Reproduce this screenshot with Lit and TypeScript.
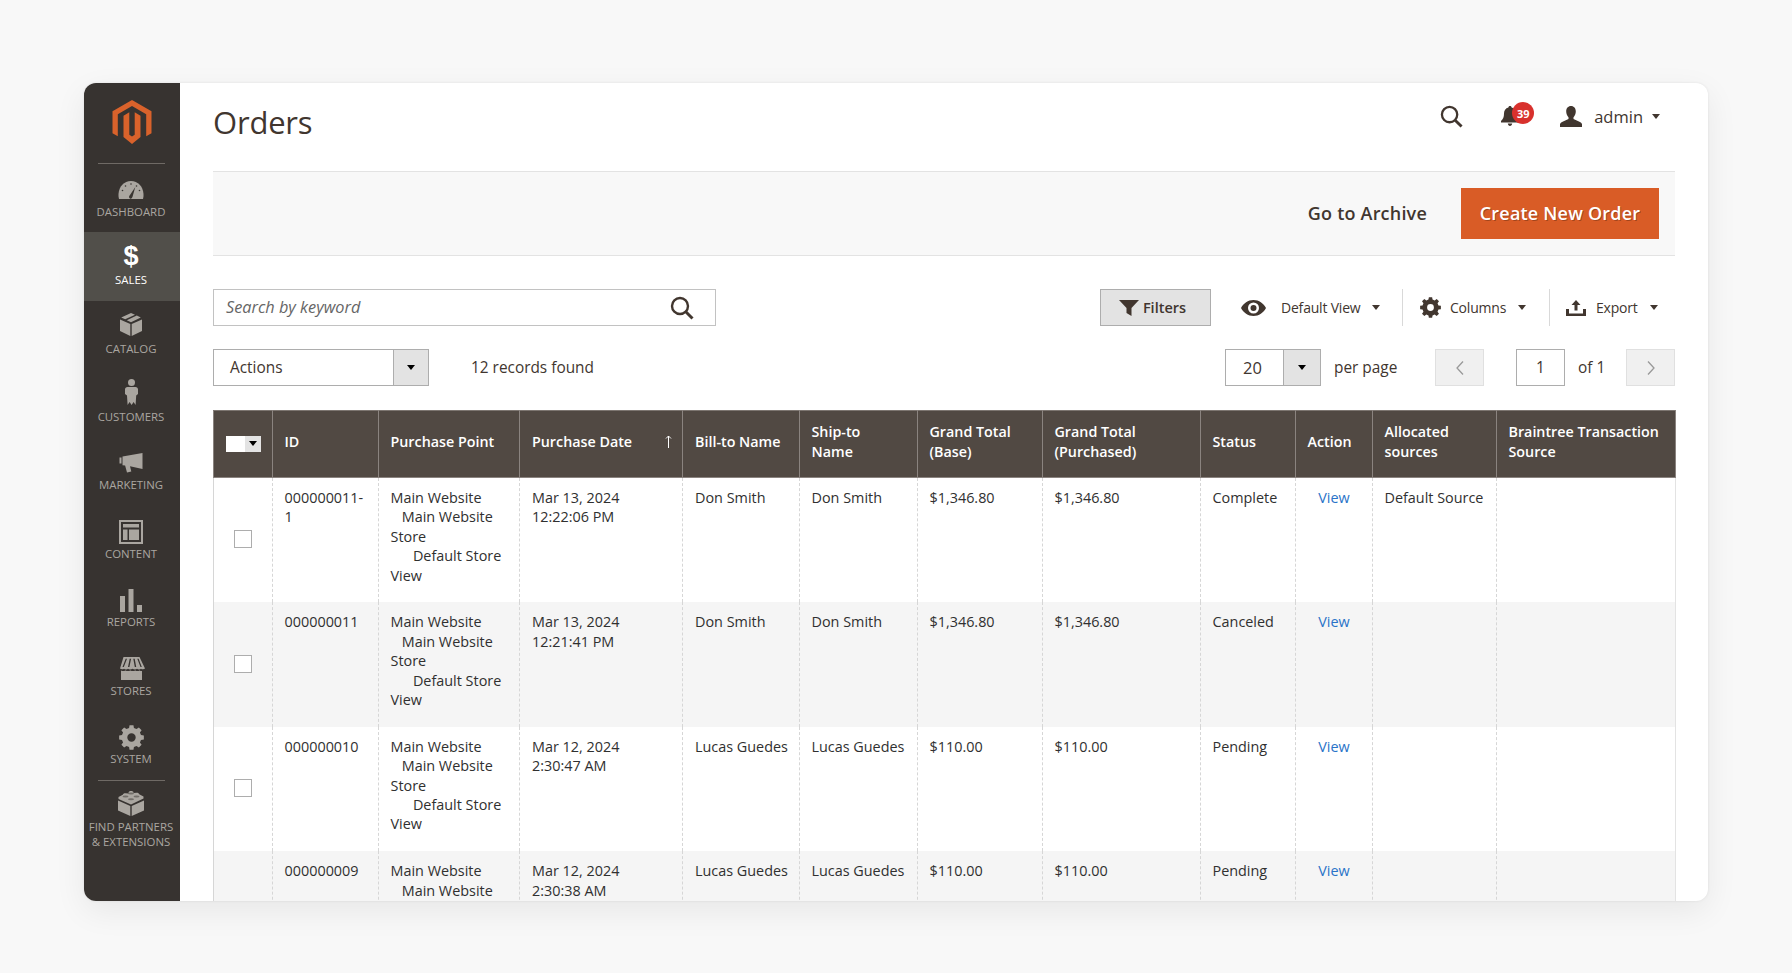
import { LitElement, html, css } from "lit";
import { customElement } from "lit/decorators.js";

function gearPath(cx: number, cy: number, r1: number, r2: number, teeth: number, hole: number) {
  let d = "";
  const step = (Math.PI * 2) / teeth;
  for (let i = 0; i < teeth; i++) {
    const a = i * step - Math.PI / 2;
    const pts = [
      [r2, a - step * 0.2],
      [r2, a + step * 0.2],
      [r1, a + step * 0.32],
      [r1, a + step * 0.68],
    ];
    for (const [r, t] of pts) {
      d += `${d ? "L" : "M"}${(cx + r * Math.cos(t)).toFixed(2)} ${(cy + r * Math.sin(t)).toFixed(2)}`;
    }
  }
  d += "Z";
  d += `M${cx - hole} ${cy}a${hole} ${hole} 0 1 0 ${hole * 2} 0a${hole} ${hole} 0 1 0 ${-hole * 2} 0Z`;
  return d;
}

const navIcons: Record<string, any> = {
  dashboard: html`<svg width="26" height="20" viewBox="0 0 26 20"><path fill-rule="evenodd" d="M13 1C6 1 1 6.500 0.500 14c-.1 2 .1 3.500.5 5h24c.4-1.500.6-3 .5-5C25 6.500 20 1 13 1Z"/><path d="M12 18.500c-1.300-.8-1.200-2.300-.2-3.200L17.300 7l-2.700 9.600c-.4 1.500-1.400 2.500-2.600 1.900Z" fill="#3a3632"/><g fill="#3a3632"><circle cx="13" cy="4" r=".8"/><circle cx="7.500" cy="6" r=".8"/><circle cx="18.500" cy="6" r=".8"/><circle cx="4.500" cy="10.500" r=".8"/><circle cx="21.500" cy="10.500" r=".8"/></g></svg>`,
  catalog: html`<svg width="22" height="23" viewBox="0 0 22 23"><path d="M0 6.500 10.300 11v12L0 18ZM22 6.500 11.700 11v12L22 18ZM11 0l4 1.700L5.200 6.200 1.200 4.500ZM16.800 2.500l4 2L11 9.300 6.800 7.300Z"/></svg>`,
  customers: html`<svg width="13" height="26" viewBox="0 0 13 26"><circle cx="6.500" cy="3.600" r="3.500"/><path d="M2.500 8h8C12 8 13 9 13 10.500V15l-1.800 1.500L10.600 26l-2-3-2 3-2-3-2 3-.6-9.500L0 15v-4.500C0 9 1 8 2.500 8Z"/></svg>`,
  marketing: html`<svg width="24" height="20" viewBox="0 0 24 20"><path d="M23.500 0v16L11 13.200l1.300 5.300-4.300 1-1.900-7-2.600-.2V3.500ZM.5 4.500h2v6h-2Z"/></svg>`,
  content: html`<svg width="24" height="24" viewBox="0 0 24 24"><path fill-rule="evenodd" d="M0 0h24v24H0Zm2 2v20h20V2Zm2 2h16v3.500H4Zm0 5.500h4.500V20H4Zm6 0h10V20H10Z"/></svg>`,
  reports: html`<svg width="22" height="23" viewBox="0 0 22 23"><path d="M0 7h5v16H0ZM8.500 0h5v23h-5ZM17 16h5v7h-5Z"/></svg>`,
  stores: html`<svg width="27" height="23" viewBox="0 0 27 23"><path fill-rule="evenodd" d="M5.500 0h16l5.500 11.500c-1 1-3 1-4 .2-1 1-3 1-4 0-1 1-3 1-4.500 0-1.500 1-3.500 1-4.500 0-1 1-3 1-4 0-1 .8-3 .8-4-.2ZM7.700 1.800 4.500 10h1.300l3.200-8.200Zm4 0L10 10h1.400l1.700-8.200Zm3.600 0 1.500 8.200h1.400l-1.500-8.200Zm4 0 3.200 8.200h1.300l-3.200-8.200Z"/><path d="M3 13.500c1.500.8 3 .8 4.300 0 1.800.8 3.500.8 5 0 1.700.8 3.200.8 5 0 1.300.8 3 .8 4.400 0 1 .6 1.800.6 2.300.4V23H3Z"/></svg>`,
  system: html`<svg width="25" height="25" viewBox="0 0 25 25"><path fill-rule="evenodd" d="${gearPath(12.5, 12.5, 9.8, 12.5, 8, 4.2)}"/></svg>`,
  partners: html`<svg width="26" height="25" viewBox="0 0 26 25"><path d="M0 9.500 12.300 15v10L0 19.500ZM26 9.500 13.700 15v10L26 19.500ZM13 0c1.400 0 2.500.6 2.500 1.400v.5l3-.1c1.600 0 2.700.7 2.700 1.500l4.300 2.100v2L13 13.500.5 7.900v-2L4.800 3.800c0-.8 1.100-1.500 2.700-1.500l3 .1v-.5C10.500.6 11.600 0 13 0Z"/><g fill="#3a3632"><ellipse cx="13" cy="2.600" rx="3" ry="1" opacity=".5"/><ellipse cx="7.500" cy="5.400" rx="3" ry="1" opacity=".5"/><ellipse cx="18.500" cy="5.400" rx="3" ry="1" opacity=".5"/><ellipse cx="13" cy="8.200" rx="3" ry="1" opacity=".5"/></g></svg>`,
};

const searchIcon = (s: number) => html`<svg width="${s}" height="${s}" viewBox="0 0 24 24" fill="none" stroke="#41362f" stroke-width="2.4"><circle cx="10" cy="10" r="8"/><path d="M15.800 15.800 22.500 22.500" stroke-width="3"/></svg>`;
const caret = html`<i class="caret"></i>`;

const rows = [
  { id: "000000011-1", date: ["Mar 13, 2024", "12:22:06 PM"], bill: "Don Smith", ship: "Don Smith", base: "$1,346.80", pur: "$1,346.80", status: "Complete", src: "Default Source" },
  { id: "000000011", date: ["Mar 13, 2024", "12:21:41 PM"], bill: "Don Smith", ship: "Don Smith", base: "$1,346.80", pur: "$1,346.80", status: "Canceled", src: "" },
  { id: "000000010", date: ["Mar 12, 2024", "2:30:47 AM"], bill: "Lucas Guedes", ship: "Lucas Guedes", base: "$110.00", pur: "$110.00", status: "Pending", src: "" },
  { id: "000000009", date: ["Mar 12, 2024", "2:30:38 AM"], bill: "Lucas Guedes", ship: "Lucas Guedes", base: "$110.00", pur: "$110.00", status: "Pending", src: "" },
];

const cols = [58.5, 106, 141.5, 163, 116.5, 118, 125, 158, 95, 77, 124, 179.5];

const nav = [
  ["dashboard", "Dashboard"],
  ["sales", "Sales"],
  ["catalog", "Catalog"],
  ["customers", "Customers"],
  ["marketing", "Marketing"],
  ["content", "Content"],
  ["reports", "Reports"],
  ["stores", "Stores"],
  ["system", "System"],
];

@customElement("app-root")
export class AppRoot extends LitElement {
  static styles = css`
    :host {
      display: block;
      box-sizing: border-box;
      width: 1792px;
      height: 973px;
      padding: 83px 84px 0;
      background: #f8f8f8;
      font-family: "Open Sans", "Liberation Sans", sans-serif;
      color: #303030;
      overflow: hidden;
    }
    * { box-sizing: border-box; }
    .card {
      display: flex;
      height: 818px;
      background: #fff;
      border-radius: 12px;
      overflow: hidden;
      box-shadow: 0 0 3px rgba(0,0,0,.08), 0 10px 32px rgba(0,0,0,.07);
    }
    .side {
      width: 96px;
      flex: none;
      background: #373330;
      display: flex;
      flex-direction: column;
      align-items: stretch;
    }
    .logo { height: 80px; display: flex; align-items: center; justify-content: center; padding: 0 1px 3px 0; }
    .rule { height: 1px; margin: 0 15px 0 14px; background: #6f6a65; flex: none; }
    .nav {
      height: 68.4px;
      flex: none;
      display: flex;
      flex-direction: column;
      align-items: center;
      justify-content: flex-end;
      padding: 0 2px 13.5px 0;
      color: #aaa6a0;
      fill: #aaa6a0;
      font-size: 11.4px;
      line-height: 15px;
      text-transform: uppercase;
      text-align: center;
    }
    .nav .ic { height: 28px; display: flex; align-items: center; justify-content: center; margin-bottom: 3px; }
    .nav.dashboard .ic svg { margin-top: 7px; }
    .nav.marketing .ic svg { margin-top: 6px; }
    .nav.customers .ic svg { margin-bottom: 1px; }
    .nav.sales .ic span, .nav.catalog .ic svg { margin-top: 2px; }
    .nav.content .ic svg, .nav.reports .ic svg, .nav.system .ic svg, .nav.stores .ic svg { margin-top: 6px; }
    .nav.active { background: #514f4a; color: #fff; }
    .dollar { font-family: "Liberation Sans", sans-serif; font-weight: 700; font-size: 27px; line-height: 28px; color: #fff; }
    .partners { height: auto; padding: 9px 2px 0 0; justify-content: flex-start; }
    .partners .ic { margin-bottom: 1px; }
    .main { flex: 1; min-width: 0; padding: 0 33px; overflow: hidden; }
    .top { height: 88px; display: flex; align-items: flex-start; }
    h1 { margin: 19px 0 0; font-size: 31px; line-height: 40px; font-weight: 400; color: #41362f; letter-spacing: -.2px; }
    .top-right { margin-left: auto; display: flex; align-items: center; margin-top: 20px; padding-right: 15px; height: 26px; }
    .bell { position: relative; margin-left: 38px; display: flex; width: 20px; }
    .badge {
      position: absolute; left: 11px; top: -4px; width: 22px; height: 22px; border-radius: 50%;
      background: #d8312d; color: #fff; font-size: 11px; font-weight: 700; display: flex; align-items: center; justify-content: center;
    }
    .user { margin-left: 39px; display: flex; }
    .admin { margin-left: 12px; font-size: 16.5px; font-weight: 500; color: #41362f; }
    .caret { display: inline-block; width: 0; height: 0; border: 4.5px solid transparent; border-top: 5.5px solid #41362f; border-bottom: 0; }
    .admin + .caret { margin-left: 9px; }
    .bar {
      height: 85px;
      background: #f8f8f8;
      border-top: 1px solid #e3e3e3;
      border-bottom: 1px solid #e3e3e3;
      display: flex; align-items: center; justify-content: flex-end;
      padding-right: 16px;
    }
    .archive { font-size: 18px; font-weight: 600; color: #41362f; margin: 0 34px 2px 0; letter-spacing: .2px; }
    .create {
      width: 198px; height: 51px; margin-bottom: 1px; padding-bottom: 1px; background: #d95c26; color: #fff; border: 0;
      font: 600 18px "Open Sans", sans-serif; letter-spacing: .2px; display: flex; align-items: center; justify-content: center;
      text-shadow: 1px 1px 0 rgba(0,0,0,.25);
    }
    .tools { display: flex; align-items: center; margin-top: 33px; height: 37px; }
    .search {
      width: 503px; height: 37px; border: 1px solid #c2c2c2; display: flex; align-items: center; padding: 0 21px 0 12px;
      font-size: 16.3px; font-style: italic; color: #666;
    }
    .search span { flex: 1; margin-bottom: 2px; }
    .filters {
      margin-left: auto; width: 111px; height: 37px; background: #e3e3e3; border: 1px solid #adadad;
      display: flex; align-items: center; justify-content: center; gap: 4px; font-size: 14.5px; font-weight: 600; color: #41362f;
      padding-right: 6px;
    }
    .tool { display: flex; align-items: center; font-size: 14px; color: #41362f; letter-spacing: -.2px; height: 37px; }
    .view { margin-left: 30px; width: 161px; }
    .cols { width: 147px; padding-left: 17px; border-left: 1px solid #d9d9d9; }
    .exp { width: 126px; padding-left: 16px; border-left: 1px solid #d9d9d9; }
    .tool .lbl { margin-left: 9px; }
    .view .lbl { margin-left: 15px; }
    .exp .lbl { margin-left: 10px; }
    .tool .caret { margin-left: 12px; }
    .pager { display: flex; align-items: center; margin-top: 23px; height: 37px; font-size: 15.4px; color: #41362f; }
    .sel { display: flex; height: 37px; border: 1px solid #adadad; background: #fff; }
    .sel .val { flex: 1; padding-left: 16px; display: flex; align-items: center; }
    .sel .arr { width: 35px; background: #e3e3e3; border-left: 1px solid #adadad; display: flex; align-items: center; justify-content: center; }
    .sel .arr .caret { border-top-color: #000; }
    .actions { width: 216px; }
    .found { margin-left: 42px; }
    .size { width: 96px; margin-left: auto; }
    .size .arr { width: 37px; }
    .size .val { padding-left: 17px; font-size: 16.5px; }
    .perp { margin-left: 13px; width: 101px; }
    .pbtn { width: 49px; height: 37px; background: #f0f0f0; border: 1px solid #e0e0e0; display: flex; align-items: center; justify-content: center; }
    .pnum { width: 49px; height: 37px; margin-left: 32px; border: 1px solid #adadad; display: flex; align-items: center; justify-content: center; }
    .of { margin-left: 13px; width: 48px; }
    table {
      margin-top: 24px; width: 1462px; table-layout: fixed; border-collapse: collapse; font-size: 14.4px; line-height: 19.4px; color: #303030;
      border-left: 1px solid #d6d6d6; border-right: 1px solid #e3e3e3;
    }
    th {
      height: 67px; background: #514943; color: #fff; font-weight: 600; text-align: left; padding: 0 6px 5px 12px; font-size: 14.3px;
      border: 1px solid #8a837f; border-top-color: #7d7671; vertical-align: middle;
    }
    th .sorted { display: flex; justify-content: space-between; align-items: center; }
    th .sorted svg { margin-right: 4px; }
    td { padding: 10px 6px 17.4px 12px; vertical-align: top; border-left: 1px dashed #d6d6d6; border-right: 1px dashed #d6d6d6; }
    td.id { padding-right: 12px; }
    tbody tr:nth-child(even) td { background: #f5f5f5; }
    td.chk { vertical-align: middle; text-align: center; padding: 0 0 4px; }
    .box { display: inline-block; width: 18px; height: 18px; border: 1px solid #adadad; background: #fff; vertical-align: middle; }
    .multi { display: flex; width: 35px; height: 16px; margin: 4px 0 0 0; }
    .multi > b { width: 19px; background: #fff; }
    .multi > u { flex: 1; background: #e3e3e3; display: flex; align-items: center; justify-content: center; }
    .multi .caret { border-top-color: #000; }
    td.link { color: #2a73c8; text-align: center; padding-left: 7px; }
  `;

  render() {
    return html`<div class="card">
      <aside class="side">
        <div class="logo">
          <svg width="40" height="44" viewBox="0 0 40 44" fill="#d9622b"><path d="M20 0 39.500 11.200V33.200L34.200 36.300V14.200L20 6 5.800 14.200V36.300L.5 33.200V11.200Z"/><path d="M17.300 12.300 11.500 15.700V37L20 44 28.500 37V15.700L22.700 12.300V34.700L20 36.400 17.300 34.700Z"/></svg>
        </div>
        <div class="rule"></div>
        ${nav.map(([k, l]) => html`<div class="nav ${k} ${k === "sales" ? "active" : ""}">
          <div class="ic">${k === "sales" ? html`<span class="dollar">$</span>` : navIcons[k]}</div>
          <span>${l}</span>
        </div>`)}
        <div class="rule"></div>
        <div class="nav partners">
          <div class="ic">${navIcons.partners}</div>
          <span>Find Partners<br />&amp; Extensions</span>
        </div>
      </aside>
      <main class="main">
        <header class="top">
          <h1>Orders</h1>
          <div class="top-right">
            ${searchIcon(23)}
            <div class="bell">
              <svg width="18" height="20" viewBox="0 0 18 20" fill="#41362f"><path d="M9 0c1 0 1.600.7 1.600 1.500C13.500 2.200 15 4.500 15 7.500c0 4 1 5.500 3 7.500v1.500H0V15c2-2 3-3.500 3-7.500 0-3 1.500-5.300 4.400-6C7.400.7 8 0 9 0ZM6.800 17.500h4.400C11 19 10.200 20 9 20s-2-1-2.200-2.500Z"/></svg>
              <span class="badge">39</span>
            </div>
            <div class="user">
              <svg width="22" height="21" viewBox="0 0 22 21" fill="#41362f"><path d="M11 0c3 0 4.800 2.300 4.800 5.300 0 2.300-.8 4.500-2.300 5.900v1.800l6.500 3c1 .5 2 1.300 2 2.500V21H0v-2.500c0-1.200 1-2 2-2.500l6.500-3v-1.800C7 9.800 6.200 7.600 6.200 5.300 6.200 2.300 8 0 11 0Z"/></svg>
            </div>
            <span class="admin">admin</span>${caret}
          </div>
        </header>
        <div class="bar">
          <span class="archive">Go to Archive</span>
          <div class="create">Create New Order</div>
        </div>
        <div class="tools">
          <div class="search"><span>Search by keyword</span>${searchIcon(24)}</div>
          <div class="filters">
            <svg width="20" height="16" viewBox="0 0 20 16" fill="#41362f"><path d="M0 0h20l-7.500 8v8l-5-3V8Z"/></svg>Filters
          </div>
          <div class="tool view">
            <svg width="25" height="16" viewBox="0 0 25 16" fill="#41362f"><path fill-rule="evenodd" d="M12.500 0C18 0 22.500 3.500 25 8c-2.500 4.500-7 8-12.500 8S2.500 12.500 0 8C2.500 3.500 7 0 12.500 0Zm0 2.500a5.500 5.500 0 1 0 0 11 5.500 5.500 0 0 0 0-11Zm0 2.500a3 3 0 1 1 0 6 3 3 0 0 1 0-6Z"/></svg>
            <span class="lbl">Default View</span>${caret}
          </div>
          <div class="tool cols">
            <svg width="21" height="21" viewBox="0 0 21 21" fill="#41362f"><path fill-rule="evenodd" d="${gearPath(10.5, 10.5, 8.2, 10.5, 8, 3.4)}"/></svg>
            <span class="lbl">Columns</span>${caret}
          </div>
          <div class="tool exp">
            <svg width="20" height="16" viewBox="0 0 20 16" fill="#41362f"><path d="M10 0l4.500 5H11.500v5.500h-3V5H5.500ZM0 9h3v4.500h14V9h3v7H0Z"/></svg>
            <span class="lbl">Export</span>${caret}
          </div>
        </div>
        <div class="pager">
          <div class="sel actions"><span class="val">Actions</span><span class="arr">${caret}</span></div>
          <span class="found">12 records found</span>
          <div class="sel size"><span class="val">20</span><span class="arr">${caret}</span></div>
          <span class="perp">per page</span>
          <div class="pbtn"><svg width="10" height="16" viewBox="0 0 10 16" fill="none" stroke="#999" stroke-width="1.3"><path d="M8 1.500 2 8l6 6.500"/></svg></div>
          <div class="pnum">1</div>
          <span class="of">of 1</span>
          <div class="pbtn"><svg width="10" height="16" viewBox="0 0 10 16" fill="none" stroke="#999" stroke-width="1.3"><path d="M2 1.500 8 8l-6 6.500"/></svg></div>
        </div>
        <table>
          <colgroup>${cols.map((w) => html`<col style="width:${w}px" />`)}</colgroup>
          <thead>
            <tr>
              <th><div class="multi"><b></b><u>${caret}</u></div></th>
              <th>ID</th>
              <th>Purchase Point</th>
              <th><div class="sorted">Purchase Date<svg width="7" height="13" viewBox="0 0 7 13" fill="none" stroke="#fff" stroke-width="1"><path d="M3.500 13V1M1 3.500 3.500 1 6 3.500"/></svg></div></th>
              <th>Bill-to Name</th>
              <th>Ship-to<br />Name</th>
              <th>Grand Total (Base)</th>
              <th>Grand Total (Purchased)</th>
              <th>Status</th>
              <th>Action</th>
              <th>Allocated sources</th>
              <th>Braintree Transaction Source</th>
            </tr>
          </thead>
          <tbody>
            ${rows.map((r) => html`<tr>
              <td class="chk"><span class="box"></span></td>
              <td class="id">${r.id}</td>
              <td>Main Website<br />&nbsp;&nbsp;&nbsp;Main Website Store<br />&nbsp;&nbsp;&nbsp;&nbsp;&nbsp;&nbsp;Default Store View</td>
              <td>${r.date[0]}<br />${r.date[1]}</td>
              <td>${r.bill}</td>
              <td>${r.ship}</td>
              <td>${r.base}</td>
              <td>${r.pur}</td>
              <td>${r.status}</td>
              <td class="link">View</td>
              <td>${r.src}</td>
              <td></td>
            </tr>`)}
          </tbody>
        </table>
      </main>
    </div>`;
  }
}
